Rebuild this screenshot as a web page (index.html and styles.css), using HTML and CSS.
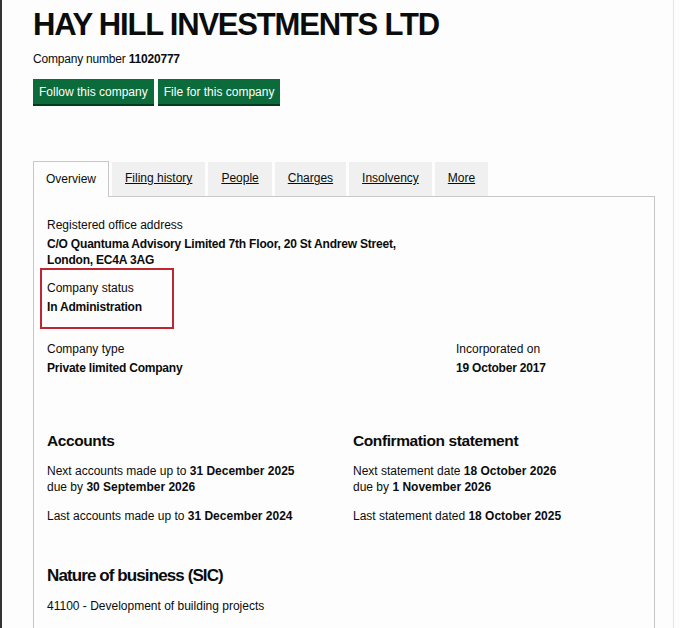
FILE: index.html
```html
<!DOCTYPE html>
<html lang="en">
<head>
<meta charset="utf-8">
<title>HAY HILL INVESTMENTS LTD</title>
<link rel="stylesheet" href="styles.css">
</head>
<body>
<div class="page">
  <h1 class="title">HAY HILL INVESTMENTS LTD</h1>
  <p class="number">Company number <b>11020777</b></p>
  <div class="buttons">
    <a class="btn">Follow this company</a>
    <a class="btn">File for this company</a>
  </div>
  <nav class="tabs">
    <span class="tab active">Overview</span>
    <a class="tab">Filing history</a>
    <a class="tab">People</a>
    <a class="tab">Charges</a>
    <a class="tab">Insolvency</a>
    <a class="tab">More</a>
  </nav>
  <div class="panel">
    <div class="field">
      <div class="label">Registered office address</div>
      <div class="value">C/O Quantuma Advisory Limited 7th Floor, 20 St Andrew Street,<br>London, EC4A 3AG</div>
    </div>
    <div class="status">
      <div class="label">Company status</div>
      <div class="value">In Administration</div>
    </div>
    <div class="row">
      <div class="col">
        <div class="label">Company type</div>
        <div class="value">Private limited Company</div>
      </div>
      <div class="col inc">
        <div class="label">Incorporated on</div>
        <div class="value">19 October 2017</div>
      </div>
    </div>
    <div class="row two">
      <div class="col">
        <h2 class="heading">Accounts</h2>
        <p class="line">Next accounts made up to <b>31 December 2025</b><br>due by <b>30 September 2026</b></p>
        <p class="line">Last accounts made up to <b>31 December 2024</b></p>
      </div>
      <div class="col">
        <h2 class="heading">Confirmation statement</h2>
        <p class="line">Next statement date <b>18 October 2026</b><br>due by <b>1 November 2026</b></p>
        <p class="line">Last statement dated <b>18 October 2025</b></p>
      </div>
    </div>
    <h2 class="heading sic">Nature of business (SIC)</h2>
    <p class="line">41100 - Development of building projects</p>
  </div>
</div>
</body>
</html>
```
FILE: styles.css
```css
html, body { margin: 0; padding: 0; }
body {
  background: #fdfdfd;
  color: #0b0c0c;
  font-family: "Liberation Sans", Arial, sans-serif;
  width: 680px;
  height: 628px;
  overflow: hidden;
}
.page {
  height: 628px;
  box-sizing: border-box;
  border-left: 2px solid #333;
  padding: 8px 0 0 31px;
  margin-right: 6px;
  border-right: 1px solid #e6e6e6;
}
.title {
  margin: 0;
  font-size: 31px;
  line-height: 34px;
  font-weight: 700;
  letter-spacing: -1.2px;
}
.number {
  margin: 9px 0 0;
  font-size: 12px;
  line-height: 16px;
  letter-spacing: -0.2px;
}
.buttons {
  display: flex;
  gap: 4px;
  margin-top: 12px;
}
.btn {
  background: #0b6b3a;
  color: #fff;
  font-size: 12px;
  line-height: 16px;
  padding: 5px 6px 4px;
  box-shadow: 0 2px 0 #053a1f;
}
.tabs {
  display: flex;
  gap: 3px;
  margin-top: 57px;
  width: 622px;
}
.tab {
  font-size: 12px;
  line-height: 16px;
  padding: 8px 13px 9px;
  background: #f0f0f0;
  color: #0b0c0c;
  text-decoration: underline;
  margin-top: 1px;
}
.tab.active {
  background: #fdfdfd;
  border: 1px solid #c8c8c8;
  border-bottom: 0;
  text-decoration: none;
  padding: 9px 12px 10px;
  margin-top: 0;
  margin-bottom: -1px;
  position: relative;
}
.panel {
  width: 622px;
  box-sizing: border-box;
  border: 1px solid #c8c8c8;
  border-bottom: 0;
  padding: 20px 13px 0;
  height: 440px;
}
.label {
  font-size: 12px;
  line-height: 16px;
}
.value {
  font-size: 12px;
  line-height: 16px;
  font-weight: 700;
  margin-top: 3px;
  letter-spacing: -0.2px;
}
.status {
  width: 120px;
  border: 2px solid #c0262f;
  margin: 0 0 0 -7px;
  padding: 10px 5px 12px 5px;
}
.row {
  display: flex;
  margin-top: 12px;
}
.row .col { flex: 0 0 409px; }
.row .col.inc { flex: 1 1 auto; }
.row.two { margin-top: 55px; }
.row.two .col { flex: 0 0 306px; }
.heading {
  margin: 0;
  font-size: 15.5px;
  line-height: 20px;
  font-weight: 700;
  letter-spacing: -0.4px;
}
.line {
  margin: 12px 0 0;
  font-size: 12px;
  line-height: 16px;
}
.line + .line { margin-top: 13px; }
.sic { margin-top: 42px; font-size: 17px; letter-spacing: -0.9px; }
.sic + .line { margin-top: 12px; }
```
